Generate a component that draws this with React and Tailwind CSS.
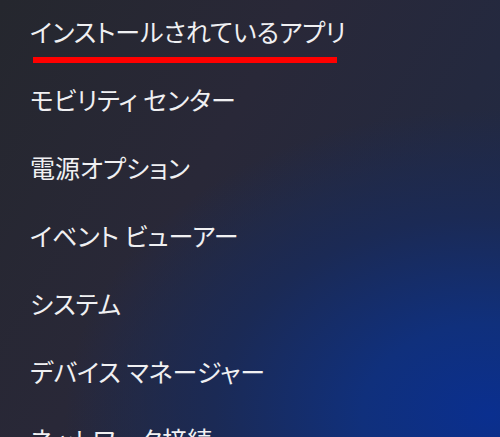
const items = [
  'インストールされているアプリ',
  'モビリティ センター',
  '電源オプション',
  'イベント ビューアー',
  'システム',
  'デバイス マネージャー',
  'ネットワーク接続',
];

export default function App() {
  return (
    <div
      className="w-[500px] h-[437px] overflow-hidden bg-[radial-gradient(ellipse_85%_70%_at_98%_95%,#0a2f8f_0%,#10307c_30%,#1b2a55_65%,transparent_100%),linear-gradient(120deg,#25272e_0%,#292838_40%,#1f2a46_100%)] text-white"
      style={{ fontFamily: '"Noto Sans CJK JP", "Noto Sans", sans-serif', fontFeatureSettings: '"palt"' }}
    >
      <ul className="flex flex-col pl-[30px] -mt-[3px]">
        {items.map((label, i) => (
          <li key={label} className="relative h-[68px] flex items-center text-[25px] leading-none whitespace-nowrap text-[#f0f0f2]">
            {label}
            {i === 0 && (
              <span className="absolute left-[3px] top-[60px] w-[304px] h-[6px] bg-[#ff0000]" />
            )}
          </li>
        ))}
      </ul>
    </div>
  );
}
